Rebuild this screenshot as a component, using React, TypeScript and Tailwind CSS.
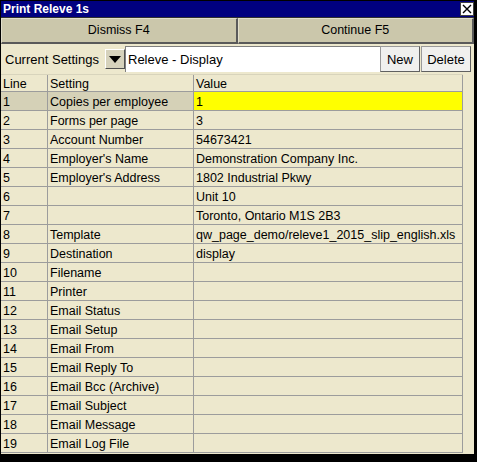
import React from 'react';

type Row = { line: number; setting: string; value: string };

const rows: Row[] = [
  { line: 1, setting: 'Copies per employee', value: '1' },
  { line: 2, setting: 'Forms per page', value: '3' },
  { line: 3, setting: 'Account Number', value: '54673421' },
  { line: 4, setting: "Employer's Name", value: 'Demonstration Company Inc.' },
  { line: 5, setting: "Employer's Address", value: '1802 Industrial Pkwy' },
  { line: 6, setting: '', value: 'Unit 10' },
  { line: 7, setting: '', value: 'Toronto, Ontario M1S 2B3' },
  { line: 8, setting: 'Template', value: 'qw_page_demo/releve1_2015_slip_english.xls' },
  { line: 9, setting: 'Destination', value: 'display' },
  { line: 10, setting: 'Filename', value: '' },
  { line: 11, setting: 'Printer', value: '' },
  { line: 12, setting: 'Email Status', value: '' },
  { line: 13, setting: 'Email Setup', value: '' },
  { line: 14, setting: 'Email From', value: '' },
  { line: 15, setting: 'Email Reply To', value: '' },
  { line: 16, setting: 'Email Bcc (Archive)', value: '' },
  { line: 17, setting: 'Email Subject', value: '' },
  { line: 18, setting: 'Email Message', value: '' },
  { line: 19, setting: 'Email Log File', value: '' },
];

const cell = 'h-full border-r border-b border-[#9c9c9c] flex items-center pl-[2px] pt-[3px] whitespace-nowrap overflow-hidden';

export default function App() {
  return (
    <div
      className="w-[477px] h-[462px] bg-black pt-px pl-px pr-[3px] pb-[8px] text-[12.5px] text-black leading-none"
      style={{ fontFamily: '"Liberation Sans", Arial, sans-serif' }}
    >
      <div className="w-full h-full bg-[#ede8cd] flex flex-col">
        {/* title bar */}
        <div className="h-[16px] bg-[#000080] flex items-center justify-between shrink-0">
          <span className="text-white font-bold text-[12px] pl-[2px]">Print Releve 1s</span>
          <div className="w-[14px] h-[14px] bg-white border border-[#404040] flex items-center justify-center">
            <svg width="10" height="10" viewBox="0 0 10 10">
              <path d="M1 1 L9 9 M9 1 L1 9" stroke="black" strokeWidth="1.4" />
            </svg>
          </div>
        </div>

        {/* dismiss / continue */}
        <div className="h-[27px] flex shrink-0 border-t border-[#303030]">
          <button className="flex-1 bg-[#cbc7ab] border-t border-l border-t-[#e2dfcc] border-l-[#e2dfcc] border-r-2 border-b-2 border-r-[#5a5a5a] border-b-[#5a5a5a] flex items-center justify-center">
            Dismiss F4
          </button>
          <button className="flex-1 bg-[#cbc7ab] border-t border-l border-t-[#e2dfcc] border-l-[#e2dfcc] border-r-2 border-b-2 border-r-[#5a5a5a] border-b-[#5a5a5a] flex items-center justify-center">
            Continue F5
          </button>
        </div>

        {/* current settings */}
        <div className="h-[30px] flex items-center shrink-0 pr-[3px]">
          <span className="w-[104px] pl-[4px] text-[13px]">Current Settings</span>
          <div className="w-[20px] h-[20px] bg-[#d6d2bc] border-t border-l border-white border-r border-b border-r-[#505050] border-b-[#505050] flex items-center justify-center">
            <svg width="12" height="7" viewBox="0 0 12 7">
              <path d="M0 0 H12 L6 7 Z" fill="black" />
            </svg>
          </div>
          <div className="flex-1 h-[26px] bg-white border-t border-l border-[#808080] flex items-center pl-[2px] text-[13px]">
            Releve - Display
          </div>
          <button className="w-[40px] h-[26px] bg-[#f0f0ee] border border-[#9a9a9a] border-r-[#606060] border-b-[#606060] flex items-center justify-center text-[13px]">
            New
          </button>
          <button className="w-[50px] h-[26px] ml-px bg-[#f0f0ee] border border-[#9a9a9a] border-r-[#606060] border-b-[#606060] flex items-center justify-center text-[13px]">
            Delete
          </button>
        </div>

        {/* table */}
        <div className="w-[462px] flex flex-col">
          <div className="h-[18px] grid grid-cols-[47px_146px_269px] border-t border-[#d8d4bc]">
            <div className={cell}>Line</div>
            <div className={cell}>Setting</div>
            <div className={cell}>Value</div>
          </div>
          {rows.map((r) => {
            const sel = r.line === 1;
            return (
              <div key={r.line} className="h-[19px] grid grid-cols-[47px_146px_269px]">
                <div className={`${cell} ${sel ? 'bg-[#d5d1b7]' : ''}`}>{r.line}</div>
                <div className={`${cell} ${sel ? 'bg-[#d5d1b7]' : ''}`}>{r.setting}</div>
                <div className={`${cell} ${sel ? 'bg-[#ffff00]' : ''}`}>{r.value}</div>
              </div>
            );
          })}
        </div>
      </div>
    </div>
  );
}
